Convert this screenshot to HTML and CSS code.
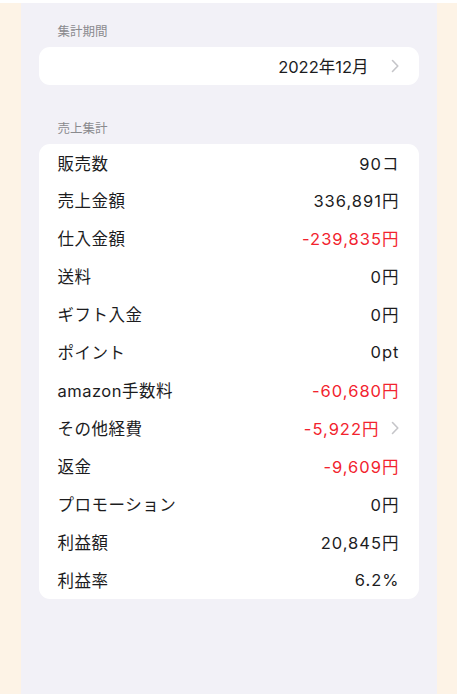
FILE: index.html
```html
<!DOCTYPE html>
<html lang="ja">
<head>
    <meta charset="UTF-8">
    <meta name="viewport" content="width=device-width, initial-scale=1.0">
    <title>売上集計</title>
    <link rel="stylesheet" href="styles.css">
</head>
<body>
    <div class="screen">
        <div class="panel">

            <!-- 集計期間 -->
            <p class="section-title">集計期間</p>
            <div class="card">
                <div class="row row-period">
                    <span class="value">2022年12月</span>
                    <svg class="chevron" viewBox="0 0 8 14" width="8" height="14"><path d="M1.5 1.5 L6.8 7 L1.5 12.5"/></svg>
                </div>
            </div>

            <!-- 売上集計 -->
            <p class="section-title section-title-second">売上集計</p>
            <div class="card">
                <div class="row"><span class="label">販売数</span><span class="value">90コ</span></div>
                <div class="row"><span class="label">売上金額</span><span class="value">336,891円</span></div>
                <div class="row"><span class="label">仕入金額</span><span class="value minus">-239,835円</span></div>
                <div class="row"><span class="label">送料</span><span class="value">0円</span></div>
                <div class="row"><span class="label">ギフト入金</span><span class="value">0円</span></div>
                <div class="row"><span class="label">ポイント</span><span class="value">0pt</span></div>
                <div class="row"><span class="label">amazon手数料</span><span class="value minus">-60,680円</span></div>
                <div class="row">
                    <span class="label">その他経費</span>
                    <span class="value-wrap">
                        <span class="value minus">-5,922円</span>
                        <svg class="chevron" viewBox="0 0 8 14" width="8" height="14"><path d="M1.5 1.5 L6.8 7 L1.5 12.5"/></svg>
                    </span>
                </div>
                <div class="row"><span class="label">返金</span><span class="value minus">-9,609円</span></div>
                <div class="row"><span class="label">プロモーション</span><span class="value">0円</span></div>
                <div class="row"><span class="label">利益額</span><span class="value">20,845円</span></div>
                <div class="row"><span class="label">利益率</span><span class="value">6.2%</span></div>
            </div>

        </div>
    </div>
</body>
</html>
```

FILE: styles.css
```css
/* Page */
html {
    background: #ffffff;
}
body {
    margin: 0;
    padding-top: 3px;
    font-family: Inter, "Noto Sans CJK JP", sans-serif;
    color: #1c1c1e;
}
.screen {
    background: #fdf3e6;
    height: 691px;
    display: flex;
    justify-content: center;
}
.panel {
    background: #f2f1f7;
    width: 416px;
    height: 691px;
    box-sizing: border-box;
    padding: 21px 18px 0;
}

/* Section headers */
.section-title {
    margin: 0 0 7px 19px;
    font-size: 12.5px;
    line-height: 16px;
    color: #8a8a8e;
}
.section-title-second {
    margin-top: 36px;
}

/* Cards */
.card {
    background: #ffffff;
    border-radius: 11px;
}
.row {
    display: flex;
    justify-content: space-between;
    align-items: center;
    height: 38px;
    padding: 0 20px 0 19px;
    font-size: 16.5px;
}
.card .row:first-child {
    height: 37px;
}
.label {
    letter-spacing: 0.5px;
}
.value {
    letter-spacing: 1px;
    margin-right: -1px;
}
.row-period {
    justify-content: flex-end;
    gap: 22px;
}
.card .row-period:first-child {
    height: 38px;
}
.row-period .value {
    letter-spacing: 0;
    margin-right: 0;
}
.value-wrap {
    display: flex;
    align-items: center;
    gap: 12px;
}
.minus {
    color: #f2232e;
}
.chevron {
    fill: none;
    stroke: #c5c5c9;
    stroke-width: 1.6;
    stroke-linecap: round;
    stroke-linejoin: round;
}
```
